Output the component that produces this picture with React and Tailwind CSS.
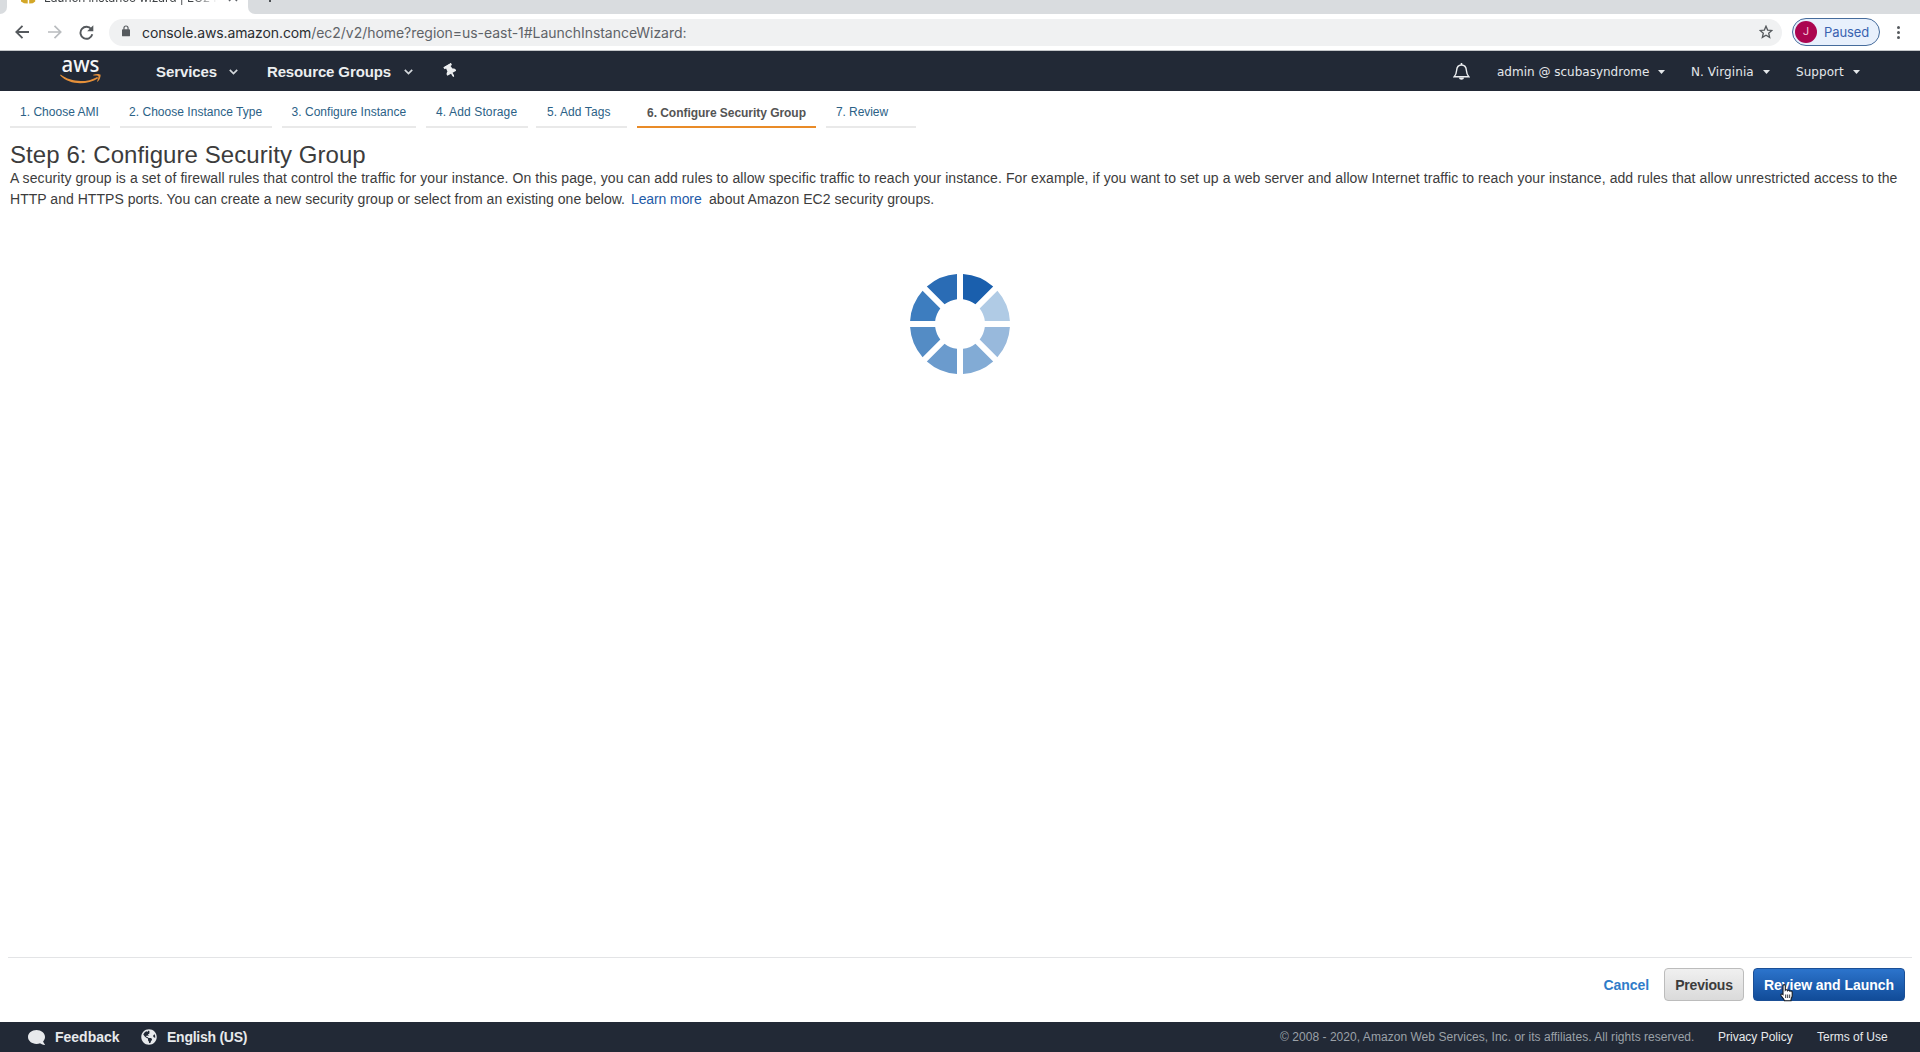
import { FaComment, FaGlobeAmericas, FaThumbtack } from "react-icons/fa";

const steps = [
  { label: "1. Choose AMI", box: "ml-[10px] w-[100px] pl-[10px]", text: "tracking-[0.02px]" },
  { label: "2. Choose Instance Type", box: "ml-[10px] w-[152px] pl-[9px]", text: "tracking-[0.03px]" },
  { label: "3. Configure Instance", box: "ml-[10px] w-[134px] pl-[9.5px]", text: "tracking-[0.03px]" },
  { label: "4. Add Storage", box: "ml-[10px] w-[102px] pl-[10px]", text: "tracking-[0.13px]" },
  { label: "5. Add Tags", box: "ml-[8px] w-[91px] pl-[11px]", text: "tracking-[0.1px]" },
  { label: "6. Configure Security Group", box: "ml-[10px] w-[179px] pl-[10px]", active: true },
  { label: "7. Review", box: "ml-[10px] w-[90px] pl-[10px]", text: "tracking-[-0.08px]" },
];

const spokes = ["#1a5fad", "#b0cbe5", "#98b9dc", "#82abd5", "#6b9bcd", "#548cc5", "#3d7dbf", "#2a6cb5"];

function wedge(i) {
  const R = 50, r = 25, g = 3;
  const a0 = (i * 45 * Math.PI) / 180;
  const a1 = ((i + 1) * 45 * Math.PI) / 180;
  const pt = (rad, a) => `${(rad * Math.sin(a)).toFixed(2)} ${(-rad * Math.cos(a)).toFixed(2)}`;
  const o = Math.asin(g / R), n = Math.asin(g / r);
  return `M${pt(r, a0 + n)}L${pt(R, a0 + o)}A${R} ${R} 0 0 1 ${pt(R, a1 - o)}L${pt(r, a1 - n)}A${r} ${r} 0 0 0 ${pt(r, a0 + n)}Z`;
}

function Spinner() {
  return (
    <svg width="102" height="102" viewBox="-51 -51 102 102">
      {spokes.map((c, i) => <path key={c} d={wedge(i)} fill={c} />)}
    </svg>
  );
}

function Chevron() {
  return (
    <svg width="9" height="6" viewBox="0 0 9 6" fill="none" stroke="#d4d8dc" strokeWidth="1.7">
      <path d="M.8.8l3.700 3.700L8.200.8" />
    </svg>
  );
}

function Caret() {
  return <svg width="7" height="4" viewBox="0 0 7 4"><path d="M0 0h7L3.5 4z" fill="#e4e7ea" /></svg>;
}

function BrowserChrome() {
  return (
    <div className="h-[51px] border-b border-[#c4c6c9] bg-white">
      <div className="flex h-[14px]">
        <div className="w-[7px] rounded-br-[7px] bg-[#d9dcdf]" />
        <div className="flex w-[241px] overflow-hidden">
          <svg className="ml-[13px]" width="17" height="14" viewBox="0 0 17 14">
            <path d="M1 0h6.700v3.600L4 3.200 1 1.500zM9.200 0h6v1.600l-2.400 1.600-3.600.4z" fill="#d3a728" />
          </svg>
          <div className="mt-[-10px] ml-[7px] h-[15px] w-[174px] overflow-hidden bg-gradient-to-r from-[#3c4043] from-85% to-transparent bg-clip-text font-['Inter',sans-serif] text-[12px] leading-[15px] tracking-[-0.08px] whitespace-nowrap text-transparent">Launch instance wizard | EC2 M</div>
          <svg className="ml-[10px]" width="10" height="4" viewBox="0 0 10 4" stroke="#5f6368" strokeWidth="1.500">
            <path d="M6.500-1.500L9 1M3.500-1.500L1 1" />
          </svg>
        </div>
        <div className="flex-1 rounded-bl-[7px] bg-[#d9dcdf] pl-[21px]">
          <div className="h-[2px] w-[2px] bg-[#4b4f53]" />
        </div>
      </div>
      <div className="flex h-[36px] items-center">
        <svg className="ml-[15px]" width="14" height="14" viewBox="0 0 14 14" fill="none" stroke="#55595d" strokeWidth="1.800"><path d="M14 7H1.500M7.500.8L1.300 7l6.200 6.200" /></svg>
        <svg className="ml-[19px]" width="14" height="14" viewBox="0 0 14 14" fill="none" stroke="#b9bcbf" strokeWidth="1.700"><path d="M0 7h12.500M6.500.8L12.700 7l-6.200 6.200" /></svg>
        <svg className="ml-[17px]" width="15" height="15" viewBox="0 0 15 15"><path d="M12.300 4.200A6 6 0 1 0 13.300 9.300" fill="none" stroke="#55595d" strokeWidth="1.900" /><path d="M14.300.3v6H8.200z" fill="#55595d" /></svg>
        <div className="ml-[15px] flex h-[27px] w-[1673px] items-center rounded-full bg-[#f0f1f2]">
          <svg className="mb-[2px] ml-[13px]" width="8" height="12" viewBox="0 0 9 13"><rect y="4.500" width="9" height="8" rx="1" fill="#55595d" /><path d="M2.200 5V3.200a2.300 2.300 0 0 1 4.600 0V5" fill="none" stroke="#55595d" strokeWidth="1.300" /></svg>
          <span className="ml-[12px] font-['Inter',sans-serif] text-[14px] tracking-[-0.04px] whitespace-nowrap text-[#5f6368]">
            <span className="tracking-[-0.11px] text-[#2a2d30]">console.aws.amazon.com</span>/ec2/v2/home?region=us-east-1#LaunchInstanceWizard:
          </span>
          <svg className="mr-[9px] ml-auto" width="14" height="14" viewBox="0 0 14 14" fill="none" stroke="#55595d" strokeWidth="1.300"><path d="M7 1.200l1.650 3.900 4.250.35-3.220 2.800.97 4.150L7 10.200l-3.650 2.200.97-4.150L1.100 5.450l4.250-.35z" /></svg>
        </div>
        <div className="ml-[10px] flex h-[28px] w-[88px] items-center rounded-full border border-[#466c9c] bg-[#e8f0fc]">
          <div className="ml-[2px] flex h-[22px] w-[22px] items-center justify-center rounded-full bg-[#ab0550] font-['Roboto',sans-serif] text-[11px] text-[#f3c4d8]">J</div>
          <span className="ml-[7px] pt-[2px] font-['Inter',sans-serif] text-[13px] tracking-[-0.1px] text-[#3a62b0]">Paused</span>
        </div>
        <div className="ml-[17px] flex flex-col gap-[2px]">
          <i className="h-[3px] w-[3px] rounded-full bg-[#55595d]" />
          <i className="h-[3px] w-[3px] rounded-full bg-[#55595d]" />
          <i className="h-[3px] w-[3px] rounded-full bg-[#55595d]" />
        </div>
      </div>
    </div>
  );
}

function ConsoleNav() {
  return (
    <nav className="flex h-[40px] items-center bg-[#222936] text-[#eceef0]">
      <svg className="ml-[60px]" width="42" height="40" viewBox="0 0 42 40">
        <text x="1.500" y="20.500" textLength="38" lengthAdjust="spacingAndGlyphs" fontFamily="Noto Sans, sans-serif" fontSize="21" fontWeight="500" fill="#f4f5f6">aws</text>
        <path d="M.6 23.600C10.500 31.200 26 32.300 37.300 25.900l.9 1.300C27 34.500 9.500 34.300.2 24.600z" fill="#e5903a" />
        <path d="M33.200 23.700c2.400-1 6.200-1 7.200-.1.600 1.300-.3 5.200-2.700 7.200l-.6-.4c.8-1.800 1.800-4.500 1.200-5.300-.6-.6-3.300-.5-5-.5z" fill="#e5903a" />
      </svg>
      <span className="ml-[54px] pt-[2px] text-[15px] font-bold tracking-[-0.1px]">Services</span>
      <div className="ml-[12px] pt-[2px]"><Chevron /></div>
      <span className="ml-[29px] pt-[2px] text-[15px] font-bold tracking-[-0.12px]">Resource Groups</span>
      <div className="ml-[13px] pt-[2px]"><Chevron /></div>
      <FaThumbtack className="ml-[32px] h-[14px] w-[11px] -rotate-[30deg]" />
      <svg className="mt-[2px] ml-auto" width="17" height="18" viewBox="0 0 17 18">
        <path d="M1.200 13.700C2.800 12 3.400 10.300 3.600 7.500 3.800 4 5.300 2 8.500 2s4.700 2 4.900 5.500c.2 2.800.8 4.500 2.400 6.200z" fill="none" stroke="#eceef0" strokeWidth="1.400" />
        <path d="M7.700 0h1.600v2H7.700zM6 14.500h5c0 3-5 3-5 0z" fill="#eceef0" />
      </svg>
      <div className="ml-[27px] flex items-center pt-[2px] font-['DejaVu_Sans',sans-serif] text-[12px] text-[#e4e7ea]">
        <span className="w-[161px] whitespace-nowrap">admin @ scubasyndrome</span><Caret />
        <span className="ml-[26px] w-[72px] tracking-[0.08px] whitespace-nowrap">N. Virginia</span><Caret />
        <span className="ml-[26px] w-[57px] tracking-[0.05px] whitespace-nowrap">Support</span><Caret />
      </div>
      <div className="w-[60px]" />
    </nav>
  );
}

function HandCursor() {
  return (
    <svg className="absolute top-[15px] left-[25px]" width="16" height="18" viewBox="0 0 16 18">
      <path d="M4 10.500V2c0-1.800 2.300-1.800 2.300 0v4.200c.7-.8 2.100-.5 2.300.5.700-.8 2-.5 2.300.5.900-.6 2.300-.1 2.300 1.300v3.200c0 1.500-.9 2.300-1.200 3.800v1.300H5.500c-.3-1.500-2-3.200-3.400-5-.9-1.300.6-2.500 1.900-1.300z" fill="#fff" stroke="#161b22" strokeWidth="1.100" />
      <path d="M6.700 10.500v3.500M8.700 10.500v3.500M10.700 10.500v3.500" stroke="#161b22" strokeWidth=".9" />
    </svg>
  );
}

export default function App() {
  return (
    <div className="flex h-[1052px] w-[1920px] flex-col overflow-hidden bg-white font-['Liberation_Sans',Arial,sans-serif]">
      <BrowserChrome />
      <ConsoleNav />
      <div className="flex h-[37px] text-[12px] whitespace-nowrap">
        {steps.map((s) =>
          s.active ? (
            <div key={s.label} className={`border-b-2 border-[#e98b28] pt-[13px] leading-[18px] font-bold tracking-[-0.04px] text-[#545454] ${s.box}`}>{s.label}</div>
          ) : (
            <div key={s.label} className={`border-b-2 border-[#e9e9e9] pt-[12px] leading-[18px] text-[#2b6186] ${s.box}`}>
              <span className={s.text}>{s.label}</span>
            </div>
          )
        )}
      </div>
      <main className="flex-1 px-[10px] pt-[13px] text-[#3c3c3c]">
        <h1 className="text-[24px] leading-[28px] tracking-[0.07px]">Step 6: Configure Security Group</h1>
        <div className="text-[14px] leading-[21px] whitespace-nowrap">
          <p className="mt-[-1px] tracking-[0.08px]">A security group is a set of firewall rules that control the traffic for your instance. On this page, you can add rules to allow specific traffic to reach your instance. For example, if you want to set up a web server and allow Internet traffic to reach your instance, add rules that allow unrestricted access to the</p>
          <p className="flex">
            <span className="w-[621px] tracking-[0.03px]">HTTP and HTTPS ports. You can create a new security group or select from an existing one below.</span>
            <span className="w-[78px] tracking-[-0.1px] text-[#1f5ba8]">Learn more</span>
            <span className="tracking-[0.06px]">about Amazon EC2 security groups.</span>
          </p>
        </div>
        <div className="mt-[62.5px] flex justify-center"><Spinner /></div>
      </main>
      <div className="ml-[8px] mr-[8px] flex h-[65px] items-start justify-end border-t border-[#e3e4e6] pt-[10px] pr-[7px] text-[14px] font-bold whitespace-nowrap">
        <span className="mr-[15px] leading-[34px] tracking-[-0.05px] text-[#2f7cc9]">Cancel</span>
        <button className="mr-[9px] h-[33px] w-[80px] rounded-[4px] border border-[#bcbcbc] bg-gradient-to-b from-[#f0f0f0] to-[#dadada] pt-[1px] tracking-[-0.2px] text-[#3c3c3c]">Previous</button>
        <button className="relative h-[33px] w-[152px] rounded-[4px] border border-[#1b4f96] bg-gradient-to-b from-[#2c74cc] to-[#114c99] pt-[1px] tracking-[-0.05px] text-white">
          Review and Launch
          <HandCursor />
        </button>
      </div>
      <footer className="flex h-[30px] items-center bg-[#222936] text-[12px] whitespace-nowrap text-[#e7e9ec]">
        <FaComment className="ml-[28px] h-[17px] w-[17px] -scale-x-100" />
        <span className="ml-[10px] w-[86px] text-[14px] font-bold">Feedback</span>
        <FaGlobeAmericas className="h-[16px] w-[16px]" />
        <span className="ml-[10px] text-[14px] font-bold tracking-[-0.25px]">English (US)</span>
        <span className="ml-auto w-[438px] tracking-[0.04px] text-[#9ba1a8]">© 2008 - 2020, Amazon Web Services, Inc. or its affiliates. All rights reserved.</span>
        <span className="w-[99px]">Privacy Policy</span>
        <span className="w-[103px]">Terms of Use</span>
      </footer>
    </div>
  );
}
